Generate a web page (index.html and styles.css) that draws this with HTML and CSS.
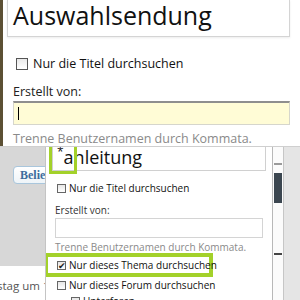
FILE: index.html
```html
<!DOCTYPE html>
<html lang="de">
  <head>
    <meta charset="utf-8" />
    <title>Suche</title>
    <link rel="stylesheet" href="styles.css">
  </head>
  <body>
    <div class="top">
      <div class="titleBox">Auswahlsendung</div>
      <label class="check">
        <span class="box"></span>
        Nur die Titel durchsuchen
      </label>
      <div class="label">Erstellt von:</div>
      <div class="userInput"><span class="caret"></span></div>
      <div class="hint">Trenne Benutzernamen durch Kommata.</div>
    </div>
    <div class="bottom">
      <div class="side">
        <div class="sideGray">
          <span class="sideButton">Beliebig</span>
        </div>
        <div class="sideText">stag um 11:20</div>
      </div>
      <div class="panel">
        <div class="panelTitle">
          <span class="star">*</span>anleitung
          <span class="mark markStar"></span>
        </div>
        <label class="pCheck first">
          <span class="pBox"></span>
          Nur die Titel durchsuchen
        </label>
        <div class="pLabel">Erstellt von:</div>
        <div class="pInput"></div>
        <div class="pHint">Trenne Benutzernamen durch Kommata.</div>
        <label class="pCheck marked">
          <span class="pBox checked">&#10004;</span>
          Nur dieses Thema durchsuchen
        </label>
        <label class="pCheck forum">
          <span class="pBox"></span>
          Nur dieses Forum durchsuchen
        </label>
        <label class="pCheck sub">
          <span class="pBox"></span>
          Unterforen
        </label>
      </div>
      <div class="scroll">
        <div class="track">
          <div class="tick"></div>
          <div class="thumb"></div>
          <div class="tick dark"></div>
        </div>
        <div class="gutter"></div>
      </div>
    </div>
  </body>
</html>
```

FILE: styles.css
```css
* {
  margin: 0;
  padding: 0;
  box-sizing: border-box;
}

body {
  width: 300px;
  height: 300px;
  overflow: hidden;
  background-color: white;
  font-family: "Open Sans", "Noto Sans", sans-serif;
}

.top {
  height: 146px;
  border-left: 3px solid #5c5034;
  padding-left: 4px;
  padding-right: 10px;
  overflow: hidden;
}

.titleBox {
  height: 37px;
  border: 1px solid #d4d4d4;
  border-top: none;
  box-shadow: 0 1px 2px #ececec;
  font-size: 25px;
  line-height: 30px;
  padding-left: 5px;
  color: #111;
}

.check {
  display: flex;
  align-items: center;
  margin: 20px 0 0 9px;
  font-size: 12.5px;
  color: #111;
  height: 13px;
}

.box {
  width: 12px;
  height: 12px;
  border: 1px solid #555;
  background: linear-gradient(#e8e8e8, #fff);
  margin-right: 5px;
}

.label {
  margin: 14px 0 0 6px;
  font-size: 12.5px;
  line-height: 15px;
  color: #222;
}

.userInput {
  margin: 2px 0 0 6px;
  height: 24px;
  background-color: #fffcd6;
  border: 1px solid #d6d6cc;
  border-top: 2px solid #8e8e8e;
  padding: 4px 0 0 4px;
}

.caret {
  display: block;
  width: 1px;
  height: 13px;
  background-color: #000;
}

.hint {
  margin: 5px 0 0 6px;
  font-size: 12.5px;
  line-height: 17px;
  color: #8a8a8a;
}

.bottom {
  display: flex;
  height: 154px;
  border-top: 1px solid #cfcfcf;
}

.side {
  width: 45px;
  display: flex;
  flex-direction: column;
}

.sideGray {
  height: 119px;
  background-color: #d7d7d7;
  padding: 19px 0 0 13px;
  overflow: hidden;
}

.sideButton {
  display: block;
  width: 60px;
  height: 18px;
  border: 1px solid #a9c6dc;
  border-radius: 4px;
  background: linear-gradient(#fff, #eef4f8);
  color: #3d6c9c;
  font-family: "Liberation Serif", serif;
  font-weight: bold;
  font-size: 12px;
  line-height: 16px;
  padding-left: 6px;
  white-space: nowrap;
}

.sideText {
  padding: 12px 0 0 1px;
  margin-left: -4px;
  font-size: 11.5px;
  line-height: 15px;
  color: #555;
  white-space: nowrap;
  overflow: hidden;
}

.panel {
  width: 227px;
  border-left: 1px solid #c4c4c4;
  padding-left: 9px;
  font-size: 10px;
  line-height: 12px;
  color: #111;
  overflow: hidden;
}

.panelTitle {
  position: relative;
  width: 214px;
  height: 24px;
  margin-left: -3px;
  border: 1px solid #d0d0d0;
  border-top: none;
  font-size: 18px;
  line-height: 20px;
  padding-left: 4px;
  color: #111;
}

.star {
  font-size: 12px;
  vertical-align: top;
  line-height: 10px;
}

.mark {
  position: absolute;
  border: 3px solid #a3d12a;
  border-top: none;
}

.markStar {
  left: -4px;
  top: -2px;
  width: 28px;
  height: 29px;
}

.pCheck {
  display: flex;
  align-items: center;
  margin-left: 2px;
  white-space: nowrap;
}

.pCheck.first {
  margin-top: 11px;
}

.pBox {
  width: 9px;
  height: 9px;
  border: 1px solid #666;
  background: linear-gradient(#e6e6e6, #fff);
  margin-right: 3px;
  font-size: 9px;
  line-height: 8px;
  text-align: center;
  color: #222;
}

.pLabel {
  margin-top: 10px;
  color: #333;
}

.pInput {
  width: 208px;
  height: 20px;
  border: 1px solid #d4d4d4;
  margin-top: 2px;
}

.pHint {
  margin-top: 3px;
  color: #8a8a8a;
}

.marked {
  margin: 0 0 0 -11px;
  padding: 2px 0 2px 9px;
  width: 169px;
  border: 4px solid #a3d12a;
}

.forum {
  margin-top: 2px;
}

.sub {
  margin-left: 16px;
  margin-top: 4px;
}

.scroll {
  flex: 1;
  display: flex;
  border-left: 1px solid #b8b8b8;
}

.track {
  width: 11px;
  background-color: #fbfbfb;
  border-right: 1px solid #c6c6c6;
  padding: 16px 1px 0 1px;
}

.tick {
  height: 2px;
  background-color: #9a9a9a;
  margin-bottom: 8px;
}

.thumb {
  height: 30px;
  background-color: #3b4650;
  margin-bottom: 50px;
}

.tick.dark {
  background-color: #444;
}

.gutter {
  flex: 1;
  background-color: #e5e5e5;
}
```
